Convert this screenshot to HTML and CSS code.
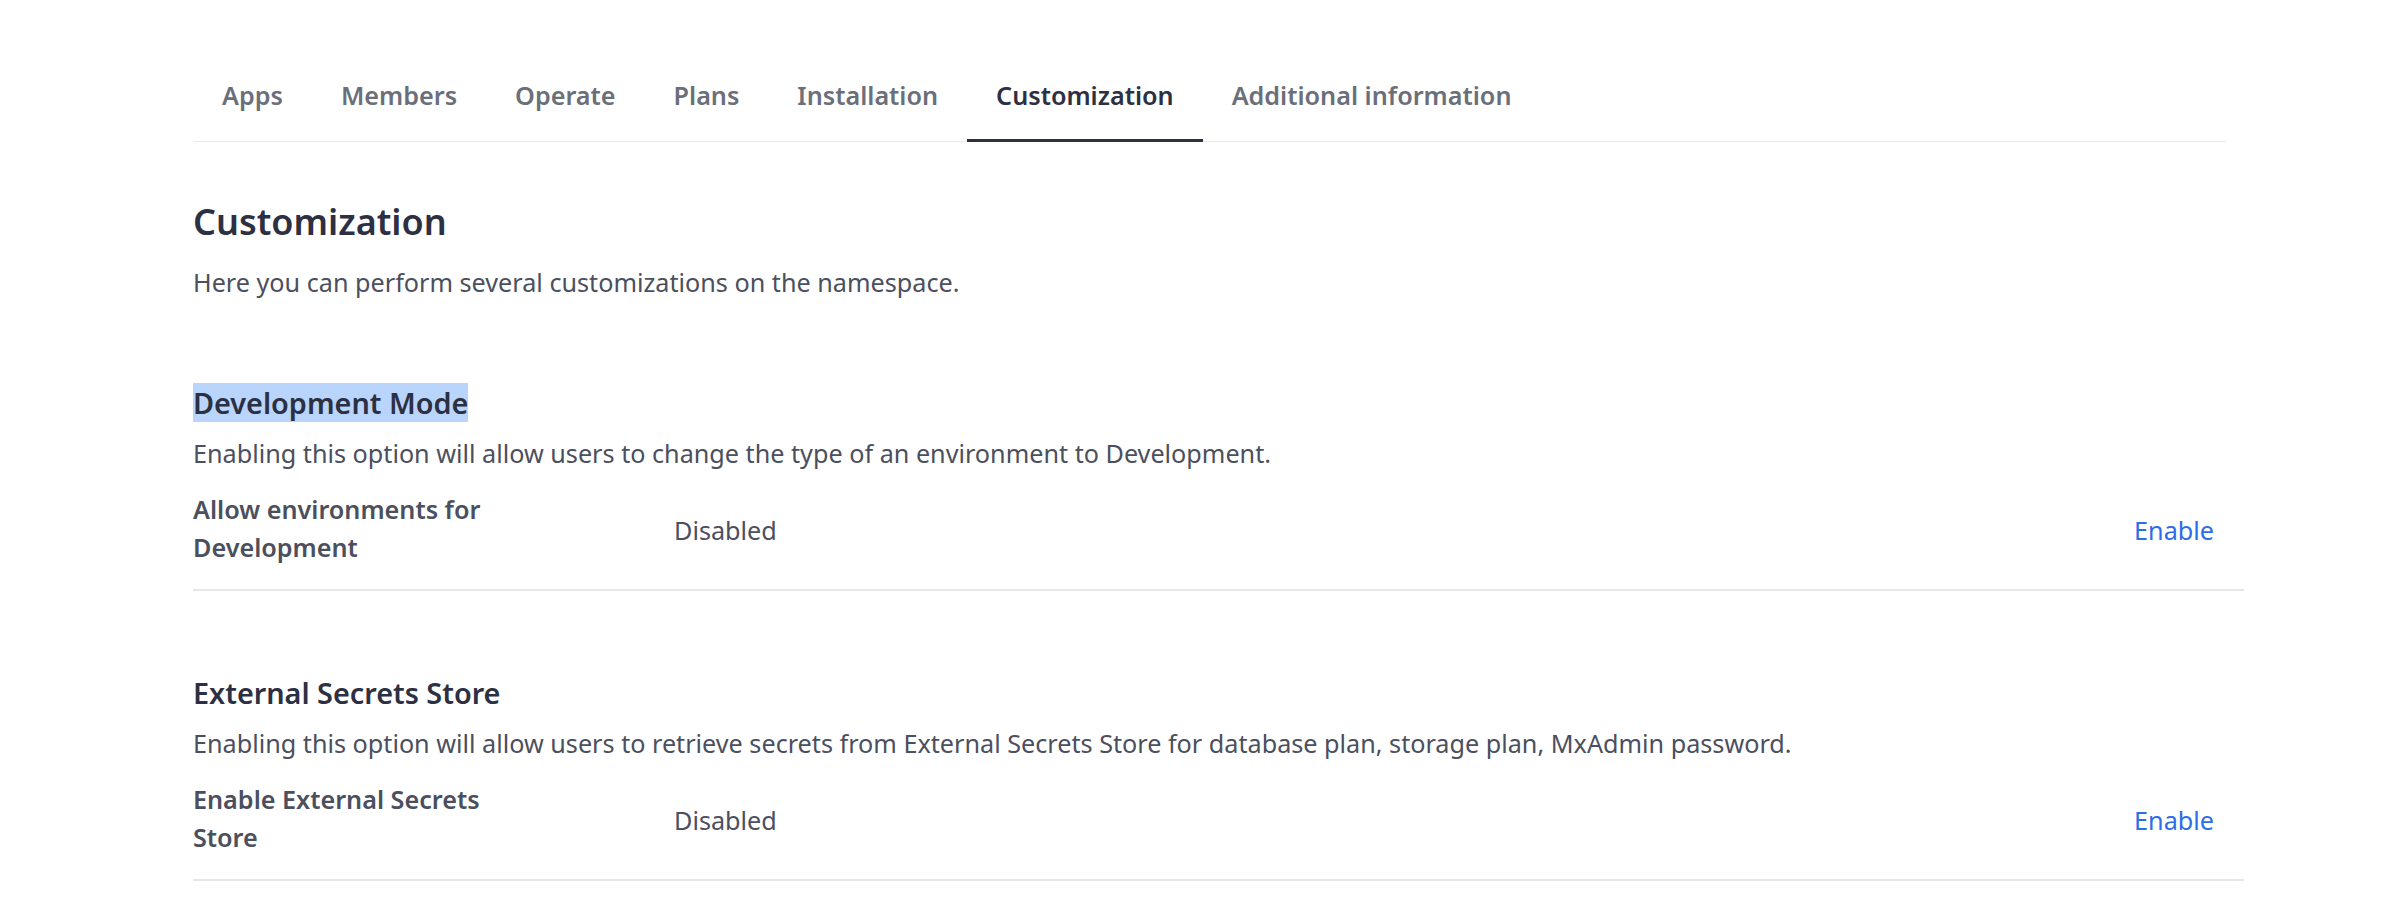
FILE: index.html
```html
<!DOCTYPE html>
<html>
<head>
<meta charset="utf-8">
<link rel="stylesheet" href="styles.css">
</head>
<body>
<div class="page">
  <nav class="tabs">
    <a class="tab">Apps</a>
    <a class="tab">Members</a>
    <a class="tab">Operate</a>
    <a class="tab">Plans</a>
    <a class="tab">Installation</a>
    <a class="tab active">Customization</a>
    <a class="tab">Additional information</a>
  </nav>
  <main class="content">
    <h1 class="title">Customization</h1>
    <p class="lead">Here you can perform several customizations on the namespace.</p>

    <section class="section first">
      <h2 class="section-title"><span class="selected">Development Mode</span></h2>
      <p class="section-desc">Enabling this option will allow users to change the type of an environment to Development.</p>
      <div class="row">
        <div class="label">Allow environments for Development</div>
        <div class="value">Disabled</div>
        <a class="action">Enable</a>
      </div>
    </section>

    <section class="section">
      <h2 class="section-title">External Secrets Store</h2>
      <p class="section-desc">Enabling this option will allow users to retrieve secrets from External Secrets Store for database plan, storage plan, MxAdmin password.</p>
      <div class="row">
        <div class="label">Enable External Secrets Store</div>
        <div class="value">Disabled</div>
        <a class="action">Enable</a>
      </div>
    </section>
  </main>
</div>
</body>
</html>
```

FILE: styles.css
```css
* { box-sizing: border-box; }
html, body { margin: 0; padding: 0; background: #ffffff; }
body {
  font-family: "Noto Sans", "Open Sans", "Liberation Sans", sans-serif;
  color: #4b4f5e;
}
.page {
  padding-left: 193px;
  padding-top: 48px;
}
.tabs {
  display: flex;
  width: 2033px;
  border-bottom: 1px solid #e9e9eb;
}
.tab {
  position: relative;
  display: block;
  padding: 28px 29px 27px;
  font-size: 25.2px;
  line-height: 38px;
  font-weight: 600;
  color: #6b6f7a;
  cursor: pointer;
}
.tab.active { color: #2c3042; }
.tab.active::after {
  content: "";
  position: absolute;
  left: 0;
  right: 0;
  bottom: -1px;
  height: 3px;
  background: #2c3042;
}
.content { width: 2051px; }
.title {
  margin: 56px 0 0;
  font-size: 36px;
  line-height: 48px;
  font-weight: 600;
  color: #2c3042;
}
.lead {
  margin: 17px 0 0;
  font-size: 25.2px;
  line-height: 38px;
  color: #4b4f5e;
}
.section { margin-top: 82px; }
.section-title {
  margin: 0;
  font-size: 28.8px;
  line-height: 40px;
  font-weight: 600;
  color: #2c3042;
}
.selected { background: #b9d5fb; }
.section-desc {
  margin: 11px 0 0;
  font-size: 25.2px;
  line-height: 38px;
  color: #4b4f5e;
}
.row {
  display: grid;
  grid-template-columns: 481px 1fr auto;
  align-items: center;
  padding: 18px 30px 23px 0;
  border-bottom: 2px solid #e6e6e8;
}
.label {
  max-width: 320px;
  font-size: 25.2px;
  line-height: 38px;
  font-weight: 600;
  color: #4b4f5e;
}
.value {
  font-size: 25.2px;
  line-height: 38px;
  color: #4b4f5e;
  padding-top: 4px;
}
.action {
  font-size: 25.2px;
  line-height: 38px;
  color: #2d6de8;
  cursor: pointer;
  padding-top: 4px;
}
```
